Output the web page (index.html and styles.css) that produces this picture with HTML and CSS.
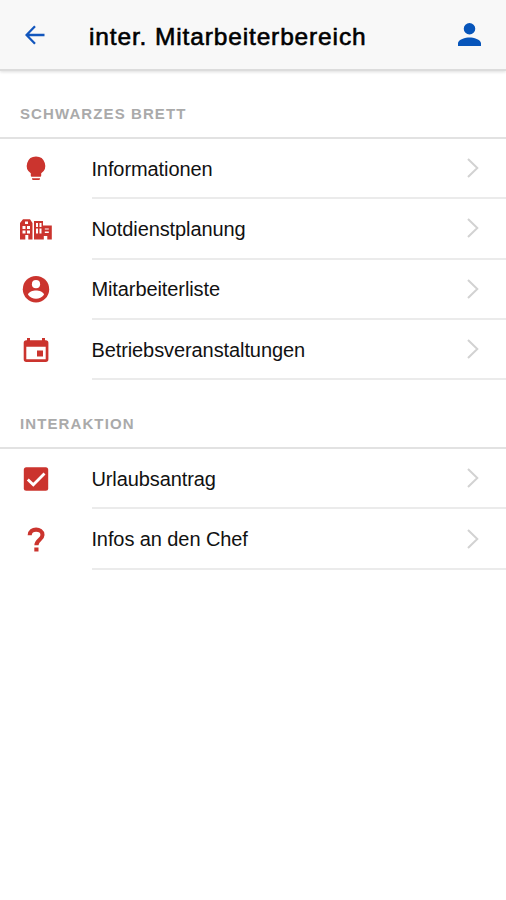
FILE: index.html
```html
<!DOCTYPE html>
<html lang="de">
<head>
<meta charset="utf-8">
<title>inter. Mitarbeiterbereich</title>
<link rel="stylesheet" href="styles.css">
</head>
<body>
<header class="toolbar">
  <svg class="back" viewBox="0 0 20 20"><path d="M19.5 10H1.8M10 1.2 1.5 10l8.500 8.800"/></svg>
  <h1>inter. Mitarbeiterbereich</h1>
  <svg class="profile" viewBox="4 4 16 16"><path d="M12 12a4 4 0 1 0 0-8 4 4 0 0 0 0 8zm0 2c-2.700 0-8 1.300-8 4v2h16v-2c0-2.700-5.300-4-8-4z"/></svg>
</header>
<main>
  <section>
    <h2 class="heading first">SCHWARZES BRETT</h2>
    <ul>
      <li><svg class="icon" viewBox="0 0 34 34"><path d="M17 4.500a9.200 9.200 0 0 0-5.200 16.800v2.400q0 1 1 1h8.400q1 0 1-1v-2.400A9.200 9.200 0 0 0 17 4.500zM13 26.300h8v.5q0 1.200-1.200 1.200h-5.600q-1.200 0-1.200-1.200z"/></svg>
        <div class="item"><span>Informationen</span><svg class="chevron" viewBox="0 0 12 20"><path d="m1 1 9.300 9L1 19"/></svg></div></li>
      <li><svg class="icon" viewBox="0 0 34 34"><path fill-rule="evenodd" d="M1 27.500V11l3-3.800h7L13.500 11v16.500H9.300V23h-3v4.500zM6 9.500v2.500h3V9.500zM3.500 14v3h3v-3zm4.500 0v3h3v-3zm-4.500 4.500v3h3v-3zm4.500 0v3h3v-3zM15 27.500V9h9v4.500h8.800v14h-4.500V24h-3.500v3.500zM17 11v4h2v-4zm3.500 0v4h2v-4zM17 16.500v5h2v-5zm3.500 0v5h2v-5zm5.300 0v1h4v-1zm0 3v1.500h4v-1.500z"/></svg>
        <div class="item"><span>Notdienstplanung</span><svg class="chevron" viewBox="0 0 12 20"><path d="m1 1 9.300 9L1 19"/></svg></div></li>
      <li><svg class="icon" viewBox="0 0 34 34"><circle cx="17" cy="16.200" r="13.200"/><circle class="hole" cx="17" cy="11.200" r="4.100"/><path class="hole" d="M9 21.800c0-2.900 5.200-4.300 8-4.300s8 1.400 8 4.300c-4 5.200-12 5.200-16 0z"/></svg>
        <div class="item"><span>Mitarbeiterliste</span><svg class="chevron" viewBox="0 0 12 20"><path d="m1 1 9.300 9L1 19"/></svg></div></li>
      <li><svg class="icon" viewBox="0 0 34 34"><path fill-rule="evenodd" d="M8 4.900h3v2.300h12V4.900h3v2.300h.8a2.600 2.600 0 0 1 2.600 2.600v16.500a2.600 2.600 0 0 1-2.600 2.600H7.300a2.600 2.600 0 0 1-2.600-2.600V9.800a2.600 2.600 0 0 1 2.600-2.600H8zM7.300 13.800v12.400h19.400V13.800zm10.700 3.700h6v6h-6z"/></svg>
        <div class="item"><span>Betriebsveranstaltungen</span><svg class="chevron" viewBox="0 0 12 20"><path d="m1 1 9.300 9L1 19"/></svg></div></li>
    </ul>
  </section>
  <section>
    <h2 class="heading">INTERAKTION</h2>
    <ul>
      <li><svg class="icon" viewBox="0 0 34 34"><rect x="4.800" y="5.300" width="24.400" height="23.400" rx="2.500"/><path class="check" d="m8.800 17.500 5.500 5.300L25.500 11.500"/></svg>
        <div class="item"><span>Urlaubsantrag</span><svg class="chevron" viewBox="0 0 12 20"><path d="m1 1 9.300 9L1 19"/></svg></div></li>
      <li><svg class="icon" viewBox="0 0 34 34"><path class="question" d="M10.700 12.300c0-7.800 12.800-7.300 12.800-.4 0 4.800-6.100 4.900-6.100 10.300"/><path d="M15.300 24.500h4.200v4h-4.200z"/></svg>
        <div class="item"><span>Infos an den Chef</span><svg class="chevron" viewBox="0 0 12 20"><path d="m1 1 9.300 9L1 19"/></svg></div></li>
    </ul>
  </section>
</main>
</body>
</html>
```
FILE: styles.css
```css
* { box-sizing: border-box; }
body { margin: 0; min-height: 900px; background: #fff; color: #111; font-family: "Liberation Sans", Arial, sans-serif; }
h1, h2, ul { margin: 0; padding: 0; }
.toolbar { display: flex; align-items: center; height: 71px; padding: 0 25px 0 25px; background: #f8f8f8; border-bottom: 2px solid #dcdcdc; box-shadow: 0 1px 3px #ddd; }
.back { width: 20px; height: 20px; fill: none; stroke: #1256bd; stroke-width: 2.3; }
h1 { flex: 1; margin-left: 44px; padding-top: 4px; font-size: 24.5px; font-weight: 400; line-height: 30px; letter-spacing: .86px; color: #000; white-space: nowrap; -webkit-text-stroke: .6px #000; }
.profile { width: 23px; height: 23px; fill: #0755ba; }
.heading { display: flex; align-items: center; height: 69px; padding: 21px 20px 0; border-bottom: 2px solid #e2e2e2; color: #aaa; font-size: 15px; line-height: 20px; font-weight: 700; letter-spacing: 1.1px; }
.heading.first { height: 68px; padding-top: 19px; }
ul { list-style: none; }
li { display: flex; align-items: center; height: 60.3px; padding-left: 19px; }
.icon { width: 34px; height: 34px; flex: none; fill: #cb342e; }
.hole { fill: #fff; }
.check { fill: none; stroke: #fff; stroke-width: 2.8; }
.question { fill: none; stroke: #cb342e; stroke-width: 4.1; }
.item { display: flex; flex: 1; align-items: center; justify-content: space-between; height: 100%; margin-left: 39px; padding-right: 27px; border-bottom: 2px solid #ebebeb; font-size: 20px; line-height: 26px; letter-spacing: -.09px; white-space: nowrap; }
.item span { padding-top: 1px; margin-left: -.6px; }
.chevron { width: 12px; height: 20px; fill: none; stroke: #d2d2d2; stroke-width: 2; }
```
